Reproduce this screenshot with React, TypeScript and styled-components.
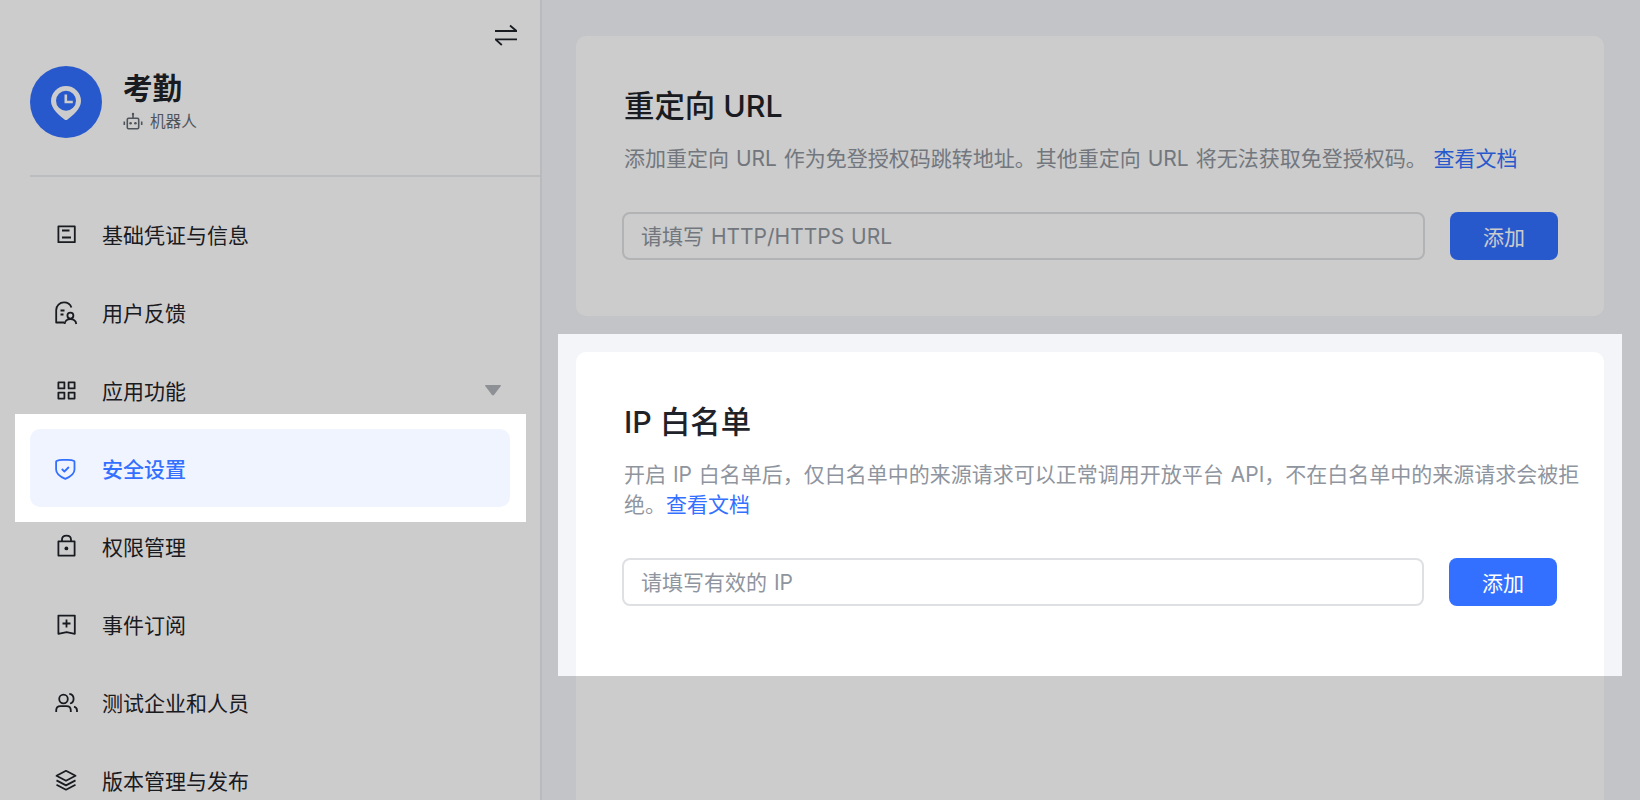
import React from "react";
import styled, { createGlobalStyle } from "styled-components";

const Global = createGlobalStyle`
  html, body { margin: 0; padding: 0; height: 100%; overflow: hidden; }
  body { font-family: Inter, "Noto Sans CJK SC", "Noto Sans", sans-serif; color: #1f2329; background: #f3f5f9; }
  * { box-sizing: border-box; }
`;

const Page = styled.div`
  position: relative;
  display: flex;
  width: 1640px;
  height: 800px;
  overflow: hidden;
  background: #f3f5f9;
`;

const Mask = styled.div`
  position: absolute;
  inset: 0;
  background: rgba(0, 0, 0, 0.2);
  clip-path: path(evenodd, "M0 0H1640V800H0Z M15 414H526V522H15Z M558 334H1622V676H558Z");
  pointer-events: none;
`;

const Sidebar = styled.aside`
  flex: 0 0 542px;
  height: 800px;
  background: #fff;
  border-right: 2px solid #e8e9ed;
  overflow: hidden;
`;

const SwitchRow = styled.div`
  display: flex;
  justify-content: flex-end;
  height: 67px;
  padding: 23px 22px 0 0;
`;

const AppHeader = styled.div`
  display: flex;
  align-items: center;
  gap: 21px;
  height: 110px;
  margin-left: 30px;
  padding-bottom: 38px;
  border-bottom: 2px solid #eaebed;
`;

const Avatar = styled.div`
  flex: 0 0 72px;
  width: 72px;
  height: 72px;
  border-radius: 50%;
  background: #3370ff;
`;

const AppInfo = styled.div`
  display: flex;
  flex-direction: column;
  gap: 3px;
  margin-bottom: 3px;
`;

const AppName = styled.div`
  font-size: 29.6px;
  font-weight: 600;
  line-height: 40px;
  color: #1f2329;
`;

const AppType = styled.div`
  display: flex;
  align-items: center;
  gap: 7px;
  font-size: 15.6px;
  line-height: 22px;
  color: #646a73;
`;

const Nav = styled.nav`
  display: flex;
  flex-direction: column;
  padding: 18px 30px 0;
`;

const NavItem = styled.div<{ $active?: boolean }>`
  display: flex;
  align-items: center;
  flex: 0 0 78px;
  gap: 23px;
  padding: 0 23px;
  border-radius: 10px;
  font-size: 21px;
  font-weight: ${(p) => (p.$active ? 500 : 400)};
  color: ${(p) => (p.$active ? "#3370ff" : "#1f2329")};
  background: ${(p) => (p.$active ? "#f0f4ff" : "transparent")};
`;

const NavLabel = styled.span`
  flex: 1;
`;

const Main = styled.main`
  flex: 1;
  display: flex;
  flex-direction: column;
  gap: 36px;
  height: 800px;
  padding: 36px 36px 0 34px;
  overflow: hidden;
`;

const Card = styled.section<{ $height: number }>`
  flex: 0 0 ${(p) => p.$height}px;
  padding: 50px 24px 0 48px;
  border-radius: 10px;
  background: #fff;
`;

const Title = styled.h2`
  margin: 0 0 18px;
  font-size: 30.4px;
  font-weight: 500;
  line-height: 40px;
  color: #1f2329;
`;

const Description = styled.p`
  margin: 0 0 38px;
  font-size: 21px;
  line-height: 30px;
  word-spacing: 1px;
  color: #8f959e;
`;

const DocLink = styled.a`
  color: #3370ff;
  text-decoration: none;
`;

const FormRow = styled.div<{ $width: number }>`
  display: flex;
  gap: 25px;
  width: ${(p) => p.$width}px;
  margin-left: -2px;
`;

const TextInput = styled.input`
  flex: 1;
  min-width: 0;
  height: 48px;
  padding: 0 17px;
  border: 2px solid #dee0e3;
  border-radius: 8px;
  outline: none;
  background: #fff;
  font-family: inherit;
  font-size: 21px;
  word-spacing: 1px;
  color: #1f2329;
  &::placeholder { color: #8f959e; opacity: 1; }
`;

const AddButton = styled.button`
  flex: 0 0 108px;
  height: 48px;
  border: 0;
  border-radius: 8px;
  background: #3370ff;
  color: #fff;
  font-family: inherit;
  font-size: 21px;
`;

const Caret = styled.span`
  width: 16px;
  height: 11px;
  margin-right: -14px;
  background: #b1b4ba;
  clip-path: polygon(4% 0, 96% 0, 100% 12%, 56% 96%, 50% 100%, 44% 96%, 0 12%);
`;

const Glyph: React.FC<{ children: React.ReactNode; color?: string }> = ({ children, color = "#1f2329" }) => (
  <svg width="26" height="26" viewBox="0 0 26 26" fill="none" stroke={color} strokeWidth="1.8" strokeLinejoin="round" strokeLinecap="butt" style={{ flex: "0 0 26px" }}>
    {children}
  </svg>
);

const items: { label: string; icon: React.ReactNode; caret?: boolean; active?: boolean }[] = [
  {
    label: "基础凭证与信息",
    icon: (<><rect x="5.4" y="5.4" width="16.4" height="15.800" /><path d="M9 9.500h7.500M9 16.500h9" /></>),
  },
  {
    label: "用户反馈",
    icon: (
      <>
        <path d="M11 23.500H3.200V11C3.200 6.600 6.700 3.400 11 3.400c3.600 0 6.400 2 7.400 5.200" />
        <path d="M7.500 11.500h4M7.500 15.500h3" />
        <circle cx="17.400" cy="16.600" r="3" />
        <path d="M11.600 25c.4-3 2.800-4.800 5.800-4.800s5.400 1.800 5.900 4.800" />
      </>
    ),
  },
  {
    label: "应用功能",
    caret: true,
    icon: (
      <>
        <rect x="5.400" y="5.400" width="6" height="6" />
        <rect x="15.600" y="5.400" width="6" height="6" />
        <rect x="5.400" y="15.600" width="6" height="6" />
        <rect x="15.600" y="15.600" width="6" height="6" />
      </>
    ),
  },
  {
    label: "安全设置",
    active: true,
    icon: (
      <>
        <path d="M12.300 4.900c3 0 6.100-.400 8.800 1.100.3.200.4.400.4.700v7.800c0 4.300-5 7.600-9.200 9.400-4.200-1.800-9.200-5.100-9.200-9.400V6.700c0-.3.100-.5.400-.7 2.700-1.500 5.800-1.100 8.800-1.100z" />
        <path d="M8.800 14l2.600 2.500 4.500-4.500" />
      </>
    ),
  },
  {
    label: "权限管理",
    icon: (
      <>
        <rect x="5.400" y="8.400" width="16.200" height="14.200" />
        <path d="M9 8.400V6.500C9 4 11 2.700 13.500 2.700S18 4 18 6.500v1.900" />
        <circle cx="13.400" cy="15.400" r="1.900" fill="#1f2329" stroke="none" />
      </>
    ),
  },
  {
    label: "事件订阅",
    icon: (
      <>
        <path d="M5.400 4.600h16.400v18.200l-8.200-1.700-8.200 1.700z" />
        <path d="M13.500 8.500v8M9.500 12.500h8" />
      </>
    ),
  },
  {
    label: "测试企业和人员",
    icon: (
      <>
        <circle cx="10.500" cy="10" r="4.300" />
        <path d="M3.200 23v-1.500c0-2.700 1.800-4.300 4.300-4.300h6c2.500 0 4.300 1.600 4.300 4.300V23" />
        <path d="M16.300 4.800c2.600.3 4.300 2.400 4.300 4.900s-1.400 4.200-3.600 4.800" />
        <path d="M21 17.600c1.800.5 3 1.900 3 3.900V23" />
      </>
    ),
  },
  {
    label: "版本管理与发布",
    icon: (
      <>
        <path d="M13 3.800l9.500 5-9.500 5-9.500-5z" />
        <path d="M3.500 13.400l9.500 5 9.500-5M3.500 17.700l9.500 5 9.500-5" />
      </>
    ),
  },
];

export default function App() {
  return (
    <Page>
      <Global />
      <Sidebar>
        <SwitchRow>
          <svg width="24" height="24" viewBox="0 0 24 24" fill="none" stroke="#1f2329" strokeWidth="1.800">
            <path d="M1 8h22M16 2.500L22.500 8M1 16.300h22M1.500 16.300L7.800 22" />
          </svg>
        </SwitchRow>
        <AppHeader>
          <Avatar>
            <svg width="72" height="72" viewBox="0 0 72 72">
              <path d="M36 20a15 15 0 0 1 15 15c0 8-9 15-13.500 18.500q-1.500 1-3 0C30 50 21 43 21 35a15 15 0 0 1 15-15z" fill="#fff" />
              <circle cx="36" cy="34.800" r="10" fill="#3370ff" />
              <path d="M35.800 28.500v7.500h7" fill="none" stroke="#fff" strokeWidth="2.600" />
            </svg>
          </Avatar>
          <AppInfo>
            <AppName>考勤</AppName>
            <AppType>
              <svg width="20" height="20" viewBox="0 0 20 20" fill="none" stroke="#646a73" strokeWidth="1.600">
                <rect x="4.300" y="6.300" width="11.400" height="10.400" rx="1.200" />
                <path d="M10 6V2.500" />
                <circle cx="10" cy="2" r="1.200" fill="#646a73" stroke="none" />
                <path d="M1.300 9.500v3.500M18.700 9.500v3.500" />
                <circle cx="7.600" cy="11.300" r="1.300" fill="#646a73" stroke="none" />
                <circle cx="12.400" cy="11.300" r="1.300" fill="#646a73" stroke="none" />
              </svg>
              机器人
            </AppType>
          </AppInfo>
        </AppHeader>
        <Nav>
          {items.map((item) => (
            <NavItem key={item.label} $active={item.active}>
              <Glyph color={item.active ? "#3370ff" : "#1f2329"}>{item.icon}</Glyph>
              <NavLabel>{item.label}</NavLabel>
              {item.caret && <Caret />}
            </NavItem>
          ))}
        </Nav>
      </Sidebar>
      <Main>
        <Card $height={280}>
          <Title>重定向 URL</Title>
          <Description>
            添加重定向 URL 作为免登授权码跳转地址。其他重定向 URL 将无法获取免登授权码。 <DocLink>查看文档</DocLink>
          </Description>
          <FormRow $width={936}>
            <TextInput placeholder="请填写 HTTP/HTTPS URL" />
            <AddButton>添加</AddButton>
          </FormRow>
        </Card>
        <Card $height={600}>
          <Title>IP 白名单</Title>
          <Description>
            开启 IP 白名单后，仅白名单中的来源请求可以正常调用开放平台 API，不在白名单中的来源请求会被拒绝。<DocLink>查看文档</DocLink>
          </Description>
          <FormRow $width={935}>
            <TextInput placeholder="请填写有效的 IP" />
            <AddButton>添加</AddButton>
          </FormRow>
        </Card>
      </Main>
      <Mask />
    </Page>
  );
}
